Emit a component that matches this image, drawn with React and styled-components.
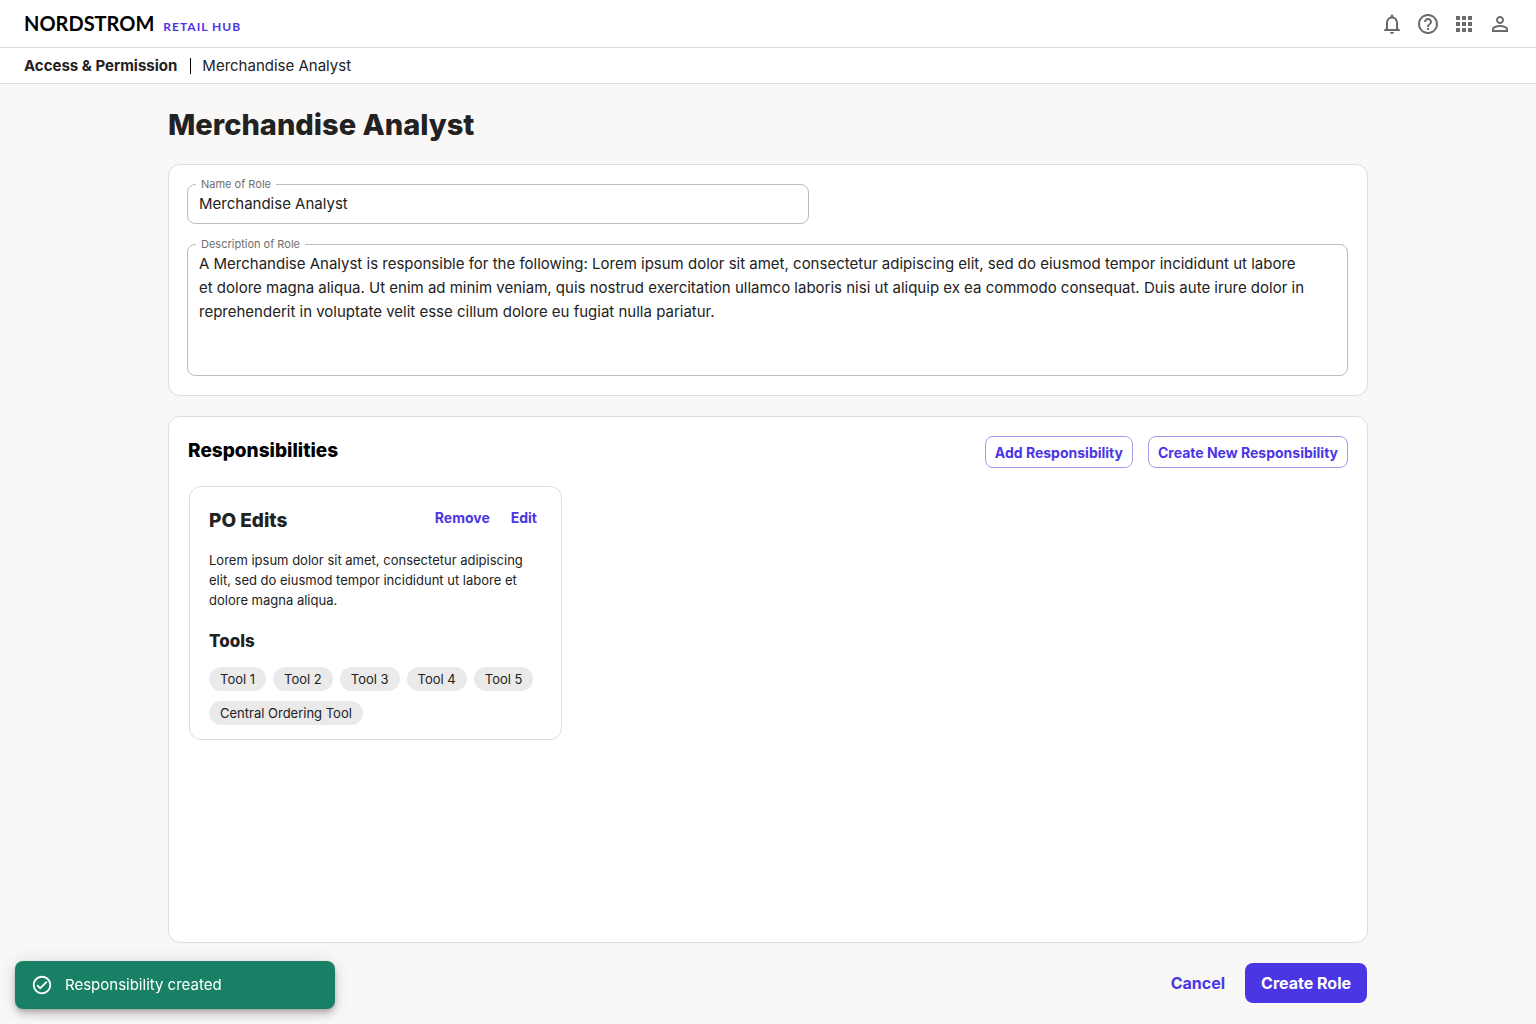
import React from 'react'
import styled, { createGlobalStyle } from 'styled-components'
import {
  MdApps,
  MdHelpOutline,
  MdNotificationsNone,
  MdOutlineCheckCircle,
  MdPersonOutline,
} from 'react-icons/md'


const colors = {
  black: '#000',
  text: '#222',
  label: '#6f6f6f',
  icon: '#6b6b6b',
  primary: '#4b36e5',
  primaryBorder: '#a59af2',
  success: '#188065',
  white: '#fff',
  background: '#f9f8f6',
  border: '#dedede',
  fieldBorder: '#bdbdbd',
  chip: '#eaeaea',
}

const GlobalStyle = createGlobalStyle`
  *, *::before, *::after {
    box-sizing: border-box;
  }

  body {
    margin: 0;
    background: ${colors.background};
    color: ${colors.text};
    font-family: Inter, sans-serif;
    font-size: 15px;
    line-height: 24px;
  }

  h1, h2, h3, h4, p, ul {
    margin: 0;
    padding: 0;
  }

  button, input, textarea {
    font-family: inherit;
  }
`
const Page = styled.div`
  display: flex;
  flex-direction: column;
  min-height: 100vh;
`
const TopBar = styled.header`
  display: flex;
  align-items: center;
  justify-content: space-between;
  height: 48px;
  padding: 0 24px;
  background: ${colors.white};
  border-bottom: 1px solid ${colors.border};
`
const Brand = styled.a`
  display: flex;
  align-items: baseline;
  gap: 9px;
  padding-top: 3px;
  font-family: Lato, sans-serif;
  text-decoration: none;
`
const BrandName = styled.span`
  color: ${colors.black};
  font-size: 20px;
  font-weight: 700;
`
const BrandProduct = styled.span`
  color: ${colors.primary};
  font-size: 12px;
  font-weight: 700;
  letter-spacing: 1px;
`
const IconBar = styled.nav`
  display: flex;
  gap: 12px;
`
const IconButton = styled.button`
  display: flex;
  padding: 0;
  border: 0;
  background: none;
  color: ${colors.icon};
  cursor: pointer;
`
const Breadcrumb = styled.nav`
  display: flex;
  align-items: center;
  height: 36px;
  padding: 0 24px;
  background: ${colors.white};
  border-bottom: 1px solid ${colors.border};
`
const BreadcrumbLink = styled.a`
  color: ${colors.text};
  font-weight: 700;
  text-decoration: none;
`
const BreadcrumbDivider = styled.span`
  width: 1px;
  height: 16px;
  margin: 0 11px 0 13px;
  background: ${colors.black};
`
const Main = styled.main`
  display: flex;
  flex: 1;
  flex-direction: column;
  gap: 20px;
  width: 100%;
  max-width: 1248px;
  margin: 0 auto;
  padding: 22px 24px 21px;
`
const PageTitle = styled.h1`
  font-size: 29px;
  font-weight: 800;
  line-height: 38px;
`
const Panel = styled.section`
  padding: ${({ padding }) => padding};
  flex: ${({ grow }) => grow ? '1' : 'none'};
  background: ${colors.white};
  border: 1px solid ${colors.border};
  border-radius: 12px;
`
const RoleForm = styled.form`
  display: flex;
  flex-direction: column;
  gap: 14px;
`
const Field = styled.fieldset`
  width: 100%;
  max-width: ${({ width }) => width || 'none'};
  min-width: 0;
  margin: 0;
  padding: 2px 8px 7px;
  border: 1px solid ${colors.fieldBorder};
  border-radius: 8px;
`
const Legend = styled.legend`
  padding: 0 5px;
  color: ${colors.label};
  font-size: 11px;
  line-height: 12px;
`
const TextInput = styled.input`
  display: block;
  width: 100%;
  height: 24px;
  padding: 0 3px;
  border: 0;
  outline: 0;
  background: none;
  color: ${colors.text};
  font-size: 15px;
  line-height: 24px;
`
const TextArea = styled.textarea`
  display: block;
  width: 100%;
  height: 116px;
  padding: 0 32px 0 3px;
  border: 0;
  outline: 0;
  background: none;
  color: ${colors.text};
  font-size: 15px;
  line-height: 24px;
  resize: none;
`
const PanelHeader = styled.div`
  display: flex;
  align-items: flex-start;
  justify-content: space-between;
  margin-bottom: 18px;
`
const PanelTitle = styled.h2`
  color: ${colors.black};
  font-size: 19px;
  font-weight: 800;
  line-height: 30px;
`
const ButtonGroup = styled.div`
  display: flex;
  gap: 15px;
`
const OutlineButton = styled.button`
  height: 32px;
  padding: 0 9px;
  border: 1px solid ${colors.primaryBorder};
  border-radius: 8px;
  background: ${colors.white};
  color: ${colors.primary};
  font-size: 14px;
  font-weight: 700;
  cursor: pointer;
`
const CardGrid = styled.div`
  display: grid;
  grid-template-columns: repeat(3, 1fr);
  gap: 20px;
  padding-left: 1px;
`
const Card = styled.article`
  padding: 19px 19px 14px;
  border: 1px solid ${colors.border};
  border-radius: 12px;
`
const CardHeader = styled.div`
  display: flex;
  align-items: flex-start;
  justify-content: space-between;
  padding-right: 5px;
`
const CardTitle = styled.h3`
  font-size: 19px;
  font-weight: 800;
  line-height: 30px;
`
const CardActions = styled.div`
  display: flex;
  gap: 21px;
`
const TextButton = styled.button`
  padding: 0;
  border: 0;
  background: none;
  color: ${colors.primary};
  font-size: ${({ size }) => size === 'large' ? '16px' : '14px'};
  font-weight: 700;
  line-height: 24px;
  cursor: pointer;
`
const CardText = styled.p`
  margin-top: 14px;
  font-size: 13px;
  line-height: 20px;
`
const CardSubtitle = styled.h4`
  margin: 19px 0 14px;
  font-size: 17px;
  font-weight: 800;
  line-height: 24px;
`
const ChipList = styled.ul`
  display: flex;
  flex-wrap: wrap;
  gap: 10px 7px;
  list-style: none;
`
const Chip = styled.li`
  padding: 0 11px;
  border-radius: 12px;
  background: ${colors.chip};
  font-size: 13px;
  line-height: 24px;
`
const FormFooter = styled.footer`
  display: flex;
  justify-content: flex-end;
  gap: 20px;
  padding-right: 1px;
`
const PrimaryButton = styled.button`
  height: 40px;
  padding: 0 16px;
  border: 0;
  border-radius: 8px;
  background: ${colors.primary};
  color: ${colors.white};
  font-size: 16px;
  font-weight: 700;
  cursor: pointer;
`
const Toast = styled.div`
  position: fixed;
  bottom: 15px;
  left: 15px;
  display: flex;
  align-items: center;
  gap: 12px;
  width: 320px;
  height: 48px;
  padding: 0 16px;
  border-radius: 8px;
  background: ${colors.success};
  box-shadow:
    0 3px 5px -1px rgba(0, 0, 0, 0.2),
    0 6px 10px rgba(0, 0, 0, 0.14),
    0 1px 18px rgba(0, 0, 0, 0.12);
  color: ${colors.white};
`

const topActions = [
  { label: 'Notifications', Icon: MdNotificationsNone },
  { label: 'Help', Icon: MdHelpOutline },
  { label: 'Apps', Icon: MdApps },
  { label: 'Account', Icon: MdPersonOutline },
]

const role = {
  name: 'Merchandise Analyst',
  description: 'A Merchandise Analyst is responsible for the following: Lorem ipsum dolor sit amet, consectetur adipiscing elit, sed do eiusmod tempor incididunt ut labore et dolore magna aliqua. Ut enim ad minim veniam, quis nostrud exercitation ullamco laboris nisi ut aliquip ex ea commodo consequat. Duis aute irure dolor in reprehenderit in voluptate velit esse cillum dolore eu fugiat nulla pariatur.',
}

const responsibilities = [
  {
    title: 'PO Edits',
    description: 'Lorem ipsum dolor sit amet, consectetur adipiscing elit, sed do eiusmod tempor incididunt ut labore et dolore magna aliqua.',
    tools: ['Tool 1', 'Tool 2', 'Tool 3', 'Tool 4', 'Tool 5', 'Central Ordering Tool'],
  },
]

const ResponsibilityCard = ({ title, description, tools }) => (
  <Card>
    <CardHeader>
      <CardTitle>{title}</CardTitle>

      <CardActions>
        <TextButton type="button">Remove</TextButton>
        <TextButton type="button">Edit</TextButton>
      </CardActions>
    </CardHeader>

    <CardText>{description}</CardText>
    <CardSubtitle>Tools</CardSubtitle>

    <ChipList>
      {tools.map((tool) => <Chip key={tool}>{tool}</Chip>)}
    </ChipList>
  </Card>
)

const App = () => (
  <Page>
    <GlobalStyle />

    <TopBar>
      <Brand href="#home">
        <BrandName>NORDSTROM</BrandName>
        <BrandProduct>RETAIL HUB</BrandProduct>
      </Brand>

      <IconBar>
        {topActions.map(({ label, Icon }) => (
          <IconButton
            key={label}
            type="button"
            aria-label={label}
          >
            <Icon size={24} />
          </IconButton>
        ))}
      </IconBar>
    </TopBar>

    <Breadcrumb aria-label="Breadcrumb">
      <BreadcrumbLink href="#access">Access &amp; Permission</BreadcrumbLink>
      <BreadcrumbDivider />
      <span>{role.name}</span>
    </Breadcrumb>

    <Main>
      <PageTitle>{role.name}</PageTitle>

      <Panel padding="13px 19px 19px 18px">
        <RoleForm id="role-form">
          <Field width="622px">
            <Legend>
              <label htmlFor="role-name">Name of Role</label>
            </Legend>
            <TextInput
              id="role-name"
              type="text"
              defaultValue={role.name}
            />
          </Field>

          <Field>
            <Legend>
              <label htmlFor="role-description">Description of Role</label>
            </Legend>
            <TextArea
              id="role-description"
              spellCheck={false}
              defaultValue={role.description}
            />
          </Field>
        </RoleForm>
      </Panel>

      <Panel padding="19px" grow={1}>
        <PanelHeader>
          <PanelTitle>Responsibilities</PanelTitle>

          <ButtonGroup>
            <OutlineButton type="button">Add Responsibility</OutlineButton>
            <OutlineButton type="button">Create New Responsibility</OutlineButton>
          </ButtonGroup>
        </PanelHeader>

        <CardGrid>
          {responsibilities.map((item) => (
            <ResponsibilityCard
              key={item.title}
              {...item}
            />
          ))}
        </CardGrid>
      </Panel>

      <FormFooter>
        <TextButton type="button" size="large">Cancel</TextButton>
        <PrimaryButton type="submit" form="role-form">Create Role</PrimaryButton>
      </FormFooter>
    </Main>

    <Toast role="status">
      <MdOutlineCheckCircle size={22} />
      <span>Responsibility created</span>
    </Toast>
  </Page>
)

export default App
